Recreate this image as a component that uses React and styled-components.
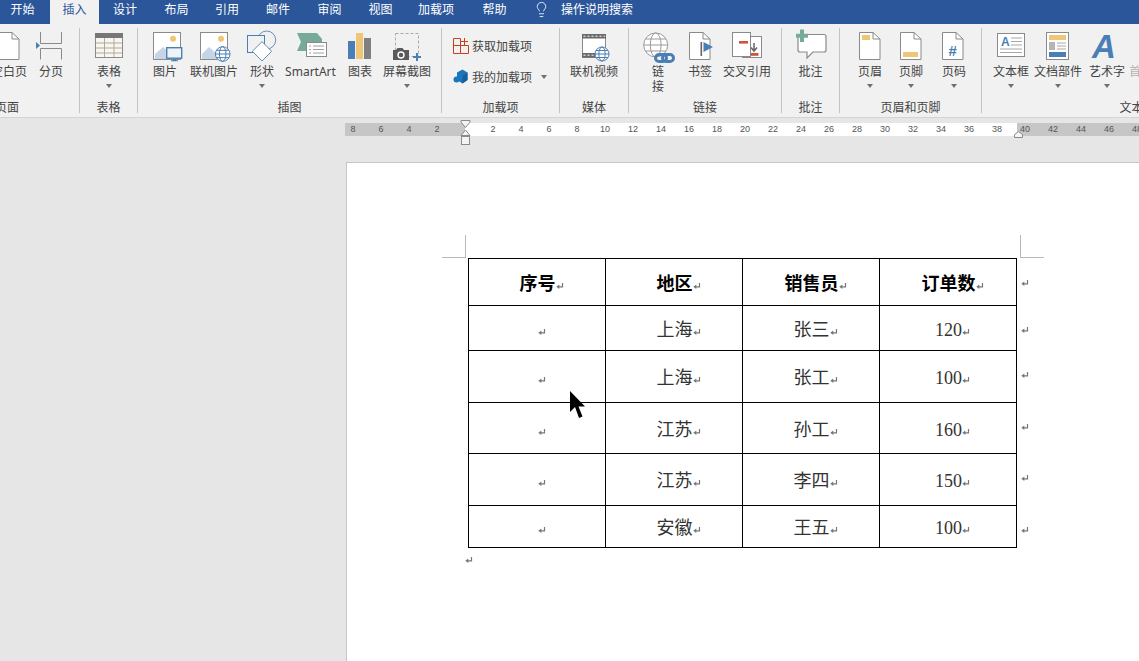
import React from 'react';
import styled, { createGlobalStyle } from 'styled-components';
import { Lightbulb } from 'lucide-react';

const BLUE = '#4a7fb5';
const GRAY = '#8a8a8a';
const YELLOW = '#efc675';
const GREEN = '#78aa9a';
const RED = '#d0533a';

const GlobalStyle = createGlobalStyle`
  html, body {
    margin: 0;
    height: 100%;
    overflow: hidden;
  }
  body {
    font-family: "Noto Sans", "Noto Sans CJK SC", sans-serif;
    font-size: 12px;
  }
`;

const Window = styled.div`
  display: flex;
  flex-direction: column;
  height: 100vh;
  overflow: hidden;
  background: #e6e6e6;
`;

const TabBar = styled.div`
  display: flex;
  flex: none;
  height: 24px;
  margin-left: -3px;
  background: #2b579a;
  color: #fff;
  line-height: 18px;
`;

const Tab = styled.div`
  box-sizing: border-box;
  width: ${(p) => p.$w || 51}px;
  margin-left: ${(p) => p.$ml || 0}px;
  padding-top: 1px;
  text-align: center;
  white-space: nowrap;
  background: ${(p) => (p.$active ? '#f1f1f1' : 'transparent')};
  color: ${(p) => (p.$active ? '#2b579a' : '#fff')};
`;

const Search = styled.div`
  display: flex;
  align-items: flex-start;
  gap: 11px;
  margin-left: 12px;
  padding-top: 1px;
  color: #fff;
`;

const Ribbon = styled.div`
  display: flex;
  flex: none;
  box-sizing: border-box;
  height: 94px;
  margin-left: -65px;
  padding-top: 4px;
  background: #f1f1f1;
  border-bottom: 1px solid #d4d4d4;
  width: calc(100% + 65px);
  overflow: hidden;
`;

const Group = styled.section`
  display: flex;
  flex: none;
  flex-direction: column;
  box-sizing: border-box;
  width: ${(p) => p.$w}px;
  height: 85px;
  border-right: 1px solid #c4c4c4;
`;

const Items = styled.div`
  display: flex;
  flex: none;
  height: 73px;
  padding-left: ${(p) => p.$pl || 0}px;
`;

const GroupLabel = styled.div`
  height: 14px;
  line-height: 14px;
  margin-bottom: -2px;
  text-align: center;
  color: #444;
  white-space: nowrap;
`;

const Btn = styled.div`
  display: flex;
  flex: none;
  flex-direction: column;
  align-items: center;
  width: ${(p) => p.$w}px;
`;

const IconSlot = styled.div`
  display: flex;
  justify-content: center;
  width: 40px;
  height: 36px;
`;

const BtnLabel = styled.div`
  line-height: ${(p) => (p.$stack ? 15 : 16)}px;
  width: ${(p) => (p.$stack ? '12px' : 'auto')};
  color: ${(p) => (p.$off ? '#b4b4b4' : '#444')};
  white-space: ${(p) => (p.$stack ? 'normal' : 'nowrap')};
  text-align: center;
`;

const Caret = styled.div`
  width: 0;
  height: 0;
  margin-top: ${(p) => p.$mt ?? 4}px;
  margin-left: ${(p) => p.$ml || 0}px;
  border-left: 3.5px solid transparent;
  border-right: 3.5px solid transparent;
  border-top: 4px solid #707070;
`;

const AddinList = styled.div`
  display: flex;
  flex-direction: column;
  gap: 15px;
  padding: 10px 0 0 11px;
`;

const AddinRow = styled.div`
  display: flex;
  align-items: center;
  gap: 3px;
  height: 16px;
  color: #444;
  white-space: nowrap;
`;

const Glyph = styled.svg.attrs({ viewBox: '0 0 40 36', width: 40, height: 36 })`
  display: block;
  overflow: visible;
`;

const Workspace = styled.div`
  display: flex;
  flex: 1;
  flex-direction: column;
  min-height: 0;
  position: relative;
`;

const Ruler = styled.div`
  display: flex;
  flex: none;
  height: 13px;
  margin: 5px 0 0 345px;
  background: linear-gradient(90deg, #c6c6c6 120px, #fff 120px, #fff 672px, #c6c6c6 672px);
`;

const RulerNums = styled.div`
  display: flex;
  margin-left: -6px;
`;

const RulerNum = styled.span`
  flex: none;
  width: 28px;
  text-align: center;
  font-family: "Liberation Sans", sans-serif;
  font-size: 9px;
  line-height: 13px;
  color: #555;
`;

const Marker = styled.svg`
  position: absolute;
  top: 0;
  left: ${(p) => p.$x}px;
  overflow: visible;
`;

const Page = styled.div`
  flex: 1;
  position: relative;
  box-sizing: border-box;
  margin: 26px 0 0 346px;
  padding: 95px 0 0 121px;
  background: #fff;
  border-left: 1px solid #c6c6c6;
  border-top: 1px solid #c6c6c6;
`;

const CropMark = styled.div`
  position: absolute;
  top: 72px;
  left: ${(p) => p.$x}px;
  width: 24px;
  height: 23px;
  box-sizing: border-box;
  border-bottom: 1px solid #b8b8b8;
  ${(p) => (p.$side === 'left' ? 'border-right: 1px solid #b8b8b8;' : 'border-left: 1px solid #b8b8b8;')}
`;

const DocTable = styled.table`
  border-collapse: collapse;
  table-layout: fixed;
  width: 561px;
  font-family: "Liberation Serif", "Noto Sans CJK SC", serif;
  font-size: 18px;
  color: #333;
`;

const Row = styled.tr`
  height: ${(p) => p.$h}px;
`;

const Cell = styled.td`
  width: 137px;
  box-sizing: border-box;
  padding: 3px 0 0 9px;
  border: 1px solid #000;
  text-align: center;
  vertical-align: middle;
  line-height: 20px;
  font-weight: ${(p) => (p.$head ? 700 : 400)};
  color: ${(p) => (p.$head ? '#000' : '#333')};
  white-space: nowrap;
`;

const RowEnd = styled.td`
  width: 12px;
  box-sizing: border-box;
  padding: 20px 0 0 4px;
  vertical-align: top;
  line-height: 0;
`;

const MarkSvg = styled.svg.attrs({ viewBox: '0 0 8 8', width: 8, height: 8 })`
  display: inline-block;
  vertical-align: 0;
`;

const EndParagraph = styled.div`
  margin: 8px 0 0 -3px;
  line-height: 0;
`;

const Cursor = styled.svg`
  position: absolute;
  left: 223px;
  top: 228px;
`;

const ReturnMark = () => (
  <MarkSvg>
    <path d="M6.5 1v3.8H2.5" fill="none" stroke="#777" strokeWidth="1.2" />
    <path d="M0.3 4.8L3.3 2.6v4.4z" fill="#777" />
  </MarkSvg>
);

const Doc = ({ x, children }) => (
  <>
    <path d={`M${x + 0.5} 4.5H${x + 14}L${x + 21} 11V31.5H${x + 0.5}Z`} fill="#fff" stroke={GRAY} />
    <path d={`M${x + 14} 4.5V11H${x + 21}`} fill="none" stroke={GRAY} />
    {children}
  </>
);

const Globe = ({ cx, cy, r, color = BLUE }) => (
  <g fill="none" stroke={color}>
    <circle cx={cx} cy={cy} r={r} fill="#fff" />
    <ellipse cx={cx} cy={cy} rx={r * 0.45} ry={r} />
    <path d={`M${cx - r} ${cy}H${cx + r}M${cx - r * 0.85} ${cy - r * 0.5}H${cx + r * 0.85}M${cx - r * 0.85} ${cy + r * 0.5}H${cx + r * 0.85}`} />
  </g>
);

const iconBlank = <Glyph><path d="M9 4.5H23L30 11V31.5H9Z" fill="#fff" stroke={GRAY} /><path d="M23 4.5V11H30" fill="none" stroke={GRAY} /></Glyph>;

const iconBreak = (
  <Glyph>
    <path d="M9.5 4V15.5H30.5V4M9.5 31.5V20.5H30.5V31.5" fill="none" stroke={GRAY} />
    <path d="M5 14L9 17.5L5 21Z" fill={BLUE} />
  </Glyph>
);

const iconTable = (
  <Glyph>
    <rect x="6.5" y="5.5" width="27" height="24" fill="#f8f6f0" stroke="#8a8a8a" />
    <rect x="6" y="5" width="28" height="5" fill="#777" />
    <path d="M7 15H33M7 20H33M7 25H33M15.5 10V29M25 10V29" stroke="#b0a99c" />
  </Glyph>
);

const iconPicture = (
  <Glyph>
    <rect x="8.5" y="4.5" width="27" height="27" fill="#fff" stroke={GRAY} />
    <circle cx="28" cy="10.7" r="3" fill={YELLOW} />
    <path d="M10 31V26L18 19L25 25V31Z" fill="#c5d5e6" />
    <rect x="21.7" y="19.7" width="15" height="10.5" fill="#eef3f8" stroke={BLUE} strokeWidth="1.4" />
    <path d="M28 31.2h3v1h2v1h-7v-1h2z" fill={BLUE} />
  </Glyph>
);

const iconOnlinePicture = (
  <Glyph>
    <rect x="6.5" y="4.5" width="27" height="27" fill="#fff" stroke={GRAY} />
    <circle cx="27" cy="10.7" r="3" fill={YELLOW} />
    <path d="M8 31V26L15 19L23 26V31Z" fill="#c5d5e6" />
    <Globe cx={28.7} cy={26} r={7.3} />
  </Glyph>
);

const iconShapes = (
  <Glyph>
    <circle cx="24.7" cy="12" r="9" fill="none" stroke="#6a8db5" strokeWidth="1" />
    <rect x="5.5" y="7.5" width="17" height="17" fill="#f1f1f1" stroke={BLUE} strokeWidth="1" />
    <path d="M20 13.7L29.7 23.3L20 33L10.3 23.3Z" fill="#fff" stroke="#6a8db5" />
  </Glyph>
);

const iconSmartArt = (
  <Glyph>
    <path d="M6 5H26L31 11V23H6L10 14Z" fill={GREEN} />
    <rect x="15.5" y="14.5" width="20" height="14" fill="#fff" stroke={GRAY} />
    <path d="M18 18h2M22 18h11M18 21.5h2M22 21.5h11M18 25h2M22 25h11" stroke="#a0a0a0" />
  </Glyph>
);

const iconChart = (
  <Glyph>
    <rect x="8" y="13" width="7" height="18" fill={BLUE} />
    <rect x="16" y="5" width="7" height="26" fill={YELLOW} />
    <rect x="24" y="10" width="7" height="21" fill="#808080" />
  </Glyph>
);

const iconScreenshot = (
  <Glyph>
    <rect x="8.5" y="5.5" width="23" height="23" fill="none" stroke="#aaa" strokeDasharray="3 2" />
    <path d="M6 22H9L10.5 20H15.5L17 22H22V32H6Z" fill="#5a5a5a" />
    <circle cx="14" cy="27" r="3" fill="none" stroke="#fff" strokeWidth="1.4" />
    <path d="M30 25V33M26 29H34" stroke={BLUE} strokeWidth="2" />
  </Glyph>
);

const iconStore = (
  <svg width="16" height="16" viewBox="0 0 16 16" fill="none" stroke="#c8401c">
    <path d="M0.5 0.5H7.5V15.5H0.5ZM0.5 7.5H15.5V15.5H7.5" />
    <path d="M11.5 0V7M8 3.5H15" />
  </svg>
);

const iconMyAddins = (
  <svg width="16" height="16" viewBox="0 0 16 16">
    <path d="M4 3.5L9.5 0.5L14.5 3.5V11L9.5 14.5L4 11Z" fill="#1b75bb" />
    <path d="M9.5 7V14.5L14.5 11V3.5Z" fill="#15609c" />
    <circle cx="3.5" cy="10.5" r="3" fill="#1b75bb" />
  </svg>
);

const iconVideo = (
  <Glyph>
    <rect x="8.5" y="6.5" width="23" height="23" fill="#fff" stroke={GRAY} />
    <rect x="8" y="6" width="24" height="4.5" fill="#6a6a6a" />
    <rect x="8" y="25" width="24" height="4.5" fill="#6a6a6a" />
    <path d="M9.5 8.2H31M9.5 27.2H31" stroke="#fff" strokeDasharray="2 2" />
    <Globe cx={28} cy={26} r={7} />
  </Glyph>
);

const iconLink = (
  <Glyph>
    <Globe cx={17.7} cy={17} r={12} color="#9a9a9a" />
    <g fill="none" stroke={BLUE} strokeWidth="3">
      <rect x="17.5" y="26.5" width="11" height="7" rx="3.5" fill="none" />
      <rect x="24.5" y="26.5" width="11" height="7" rx="3.5" fill="none" />
    </g>
  </Glyph>
);

const iconBookmark = (
  <Glyph>
    <Doc x={9} />
    <rect x="20.5" y="14" width="1.6" height="14" fill="#666" />
    <path d="M23.5 14L33 19L23.5 24Z" fill={BLUE} />
  </Glyph>
);

const iconCrossRef = (
  <Glyph>
    <rect x="15.5" y="8.5" width="19" height="21" fill="#fff" stroke={GRAY} />
    <rect x="5.5" y="4.5" width="18" height="24" fill="#fff" stroke={GRAY} />
    <rect x="12" y="13" width="9" height="2.6" fill={RED} />
    <path d="M27 15V22M24 19.5L27 23L30 19.5" fill="none" stroke="#666" strokeWidth="1.5" />
    <rect x="24" y="25" width="7.5" height="2.8" fill={RED} />
  </Glyph>
);

const iconComment = (
  <Glyph>
    <path d="M9 6.5H33Q35 6.5 35 8.5V22Q35 24 33 24H22L16 30V24H9Q7 24 7 22V8.5Q7 6.5 9 6.5Z" fill="#fff" stroke={GRAY} strokeWidth="1.2" />
    <path d="M11 1.5V14M5 7.7H17" stroke={GREEN} strokeWidth="4" />
  </Glyph>
);

const iconHeader = (
  <Glyph>
    <Doc x={9} />
    <rect x="12" y="7" width="8" height="5" fill={YELLOW} />
  </Glyph>
);

const iconFooter = (
  <Glyph>
    <Doc x={9} />
    <rect x="12" y="24" width="15" height="5" fill={YELLOW} />
  </Glyph>
);

const iconPageNumber = (
  <Glyph>
    <Doc x={8} />
    <text x="18.7" y="28" textAnchor="middle" fontFamily="Liberation Sans" fontWeight="700" fontSize="15" fill={BLUE}>#</text>
  </Glyph>
);

const iconTextBox = (
  <Glyph>
    <rect x="6.5" y="5.5" width="27" height="23" fill="#fff" stroke={GRAY} />
    <text x="10" y="18" fontFamily="Liberation Sans" fontWeight="700" fontSize="12" fill={BLUE}>A</text>
    <path d="M20 10H31M20 13.5H31M20 17H31M9 21H31M9 24.5H31" stroke="#a8a8a8" />
  </Glyph>
);

const iconDocParts = (
  <Glyph>
    <rect x="8.5" y="4.5" width="22" height="27" fill="#fff" stroke={GRAY} />
    <rect x="11" y="7" width="17" height="5" fill={YELLOW} />
    <rect x="11" y="14" width="6" height="8" fill="#b5b5b5" />
    <path d="M19 15H28M19 18H28M19 21H28" stroke="#a8a8a8" />
    <rect x="11" y="24" width="17" height="5" fill={BLUE} />
  </Glyph>
);

const iconWordArt = (
  <Glyph>
    <text x="17" y="30" textAnchor="middle" fontFamily="Liberation Sans" fontWeight="700" fontStyle="italic" fontSize="33" fill={BLUE}>A</text>
  </Glyph>
);

const BigButton = ({ w, label, icon, caret, stack, off }) => (
  <Btn $w={w}>
    <IconSlot>{icon}</IconSlot>
    <BtnLabel $stack={stack} $off={off}>{label}</BtnLabel>
    {caret && <Caret />}
  </Btn>
);

const groups = [
  { title: '页面', w: 145, pl: 50, items: [
    { w: 48, label: '空白页', icon: iconBlank },
    { w: 36, label: '分页', icon: iconBreak },
  ] },
  { title: '表格', w: 58, pl: 11, items: [
    { w: 36, label: '表格', icon: iconTable, caret: true },
  ] },
  { title: '插图', w: 304, pl: 9, items: [
    { w: 36, label: '图片', icon: iconPicture },
    { w: 62, label: '联机图片', icon: iconOnlinePicture },
    { w: 34, label: '形状', icon: iconShapes, caret: true },
    { w: 63, label: 'SmartArt', icon: iconSmartArt },
    { w: 36, label: '图表', icon: iconChart },
    { w: 58, label: '屏幕截图', icon: iconScreenshot, caret: true },
  ] },
  { title: '加载项', w: 118, addins: true },
  { title: '媒体', w: 69, items: [
    { w: 68, label: '联机视频', icon: iconVideo },
  ] },
  { title: '链接', w: 153, pl: 7, items: [
    { w: 44, label: '链接', icon: iconLink, stack: true },
    { w: 40, label: '书签', icon: iconBookmark },
    { w: 54, label: '交叉引用', icon: iconCrossRef },
  ] },
  { title: '批注', w: 58, items: [
    { w: 57, label: '批注', icon: iconComment },
  ] },
  { title: '页眉和页脚', w: 142, pl: 9, items: [
    { w: 42, label: '页眉', icon: iconHeader, caret: true },
    { w: 40, label: '页脚', icon: iconFooter, caret: true },
    { w: 46, label: '页码', icon: iconPageNumber, caret: true },
  ] },
  { title: '文本', w: 300, pl: 7, items: [
    { w: 44, label: '文本框', icon: iconTextBox, caret: true },
    { w: 50, label: '文档部件', icon: iconDocParts, caret: true },
    { w: 48, label: '艺术字', icon: iconWordArt, caret: true },
    { w: 44, label: '首字下沉', off: true },
  ] },
];

const tabs = [
  { label: '开始' },
  { label: '插入', active: true, w: 49, ml: 2 },
  { label: '设计', w: 52 },
  { label: '布局' },
  { label: '引用', w: 50 },
  { label: '邮件', w: 52 },
  { label: '审阅' },
  { label: '视图' },
  { label: '加载项', w: 60 },
  { label: '帮助', w: 53, ml: 2 },
];

const rulerNums = [8, 6, 4, 2, '', 2, 4, 6, 8, 10, 12, 14, 16, 18, 20, 22, 24, 26, 28, 30, 32, 34, 36, 38, 40, 42, 44, 46, 48];

const rows = [
  { h: 47, head: true, cells: ['序号', '地区', '销售员', '订单数'] },
  { h: 45, cells: ['', '上海', '张三', '120'] },
  { h: 52, cells: ['', '上海', '张工', '100'] },
  { h: 51, cells: ['', '江苏', '孙工', '160'] },
  { h: 52, cells: ['', '江苏', '李四', '150'] },
  { h: 42, cells: ['', '安徽', '王五', '100'] },
];

const App = () => (
  <Window>
    <GlobalStyle />
    <TabBar>
      {tabs.map((t) => (
        <Tab key={t.label} $active={t.active} $w={t.w} $ml={t.ml}>{t.label}</Tab>
      ))}
      <Search>
        <Lightbulb size={17} strokeWidth={1.2} color="#fff" />
        操作说明搜索
      </Search>
    </TabBar>
    <Ribbon>
      {groups.map((g) => (
        <Group key={g.title} $w={g.w}>
          <Items $pl={g.pl}>
            {g.addins ? (
              <AddinList>
                <AddinRow>{iconStore}获取加载项</AddinRow>
                <AddinRow>
                  {iconMyAddins}我的加载项
                  <Caret $mt={0} $ml={6} />
                </AddinRow>
              </AddinList>
            ) : (
              g.items.map((b) => <BigButton key={b.label} {...b} />)
            )}
          </Items>
          <GroupLabel>{g.title}</GroupLabel>
        </Group>
      ))}
    </Ribbon>
    <Workspace>
      <Ruler>
        <RulerNums>
          {rulerNums.map((n, i) => <RulerNum key={i}>{n}</RulerNum>)}
        </RulerNums>
      </Ruler>
      <Marker $x={460} width="11" height="28">
        <path d="M1 2.5H10V4L5.5 9.5L1 4Z" fill="#f4f4f4" stroke="#8a8a8a" />
        <path d="M5.5 12L10 17.5H1Z" fill="#f4f4f4" stroke="#8a8a8a" />
        <rect x="1.5" y="18.5" width="8" height="8" fill="#f4f4f4" stroke="#8a8a8a" />
      </Marker>
      <Marker $x={1013} width="11" height="22">
        <path d="M1.5 19.5V16.5L5.5 13.5L9.5 16.5V19.5Z" fill="#f4f4f4" stroke="#8a8a8a" />
      </Marker>
      <Page>
        <CropMark $side="left" $x={95} />
        <CropMark $side="right" $x={673} />
        <DocTable>
          <tbody>
            {rows.map((r) => (
              <Row key={r.cells.join()} $h={r.h}>
                {r.cells.map((c, i) => (
                  <Cell key={i} $head={r.head}>
                    {c}
                    <ReturnMark />
                  </Cell>
                ))}
                <RowEnd><ReturnMark /></RowEnd>
              </Row>
            ))}
          </tbody>
        </DocTable>
        <EndParagraph><ReturnMark /></EndParagraph>
        <Cursor width="16" height="28" viewBox="0 0 16 28">
          <path d="M0 0V21L5 16L9 27L12.5 25.5L8.5 15.5H15Z" fill="#000" />
        </Cursor>
      </Page>
    </Workspace>
  </Window>
);

export default App;
